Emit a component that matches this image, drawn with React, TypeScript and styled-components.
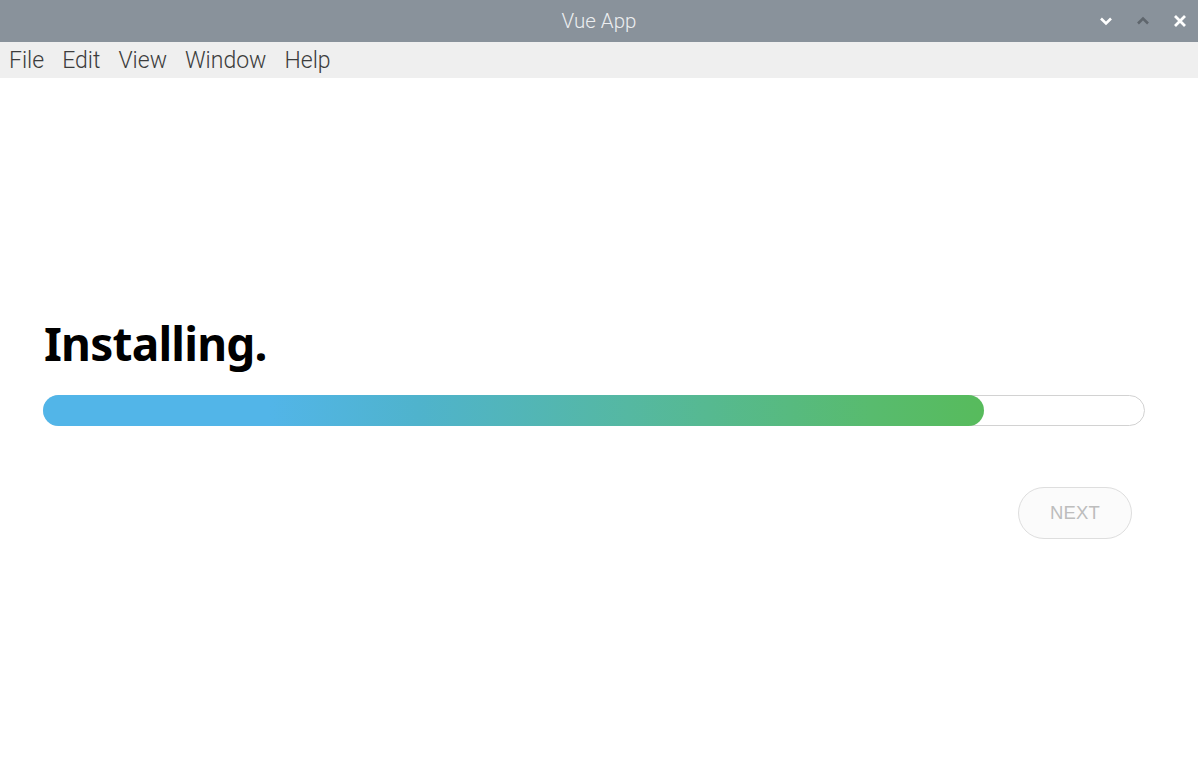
import styled, { createGlobalStyle } from "styled-components";

const GlobalStyle = createGlobalStyle`
  html, body {
    margin: 0;
    padding: 0;
    background: #ffffff;
  }
  * {
    box-sizing: border-box;
  }
`;

const Window = styled.div`
  width: 1198px;
  height: 758px;
  display: flex;
  flex-direction: column;
  overflow: hidden;
  background: #ffffff;
`;

const TitleBar = styled.div`
  height: 42px;
  background: #89929b;
  display: grid;
  grid-template-columns: 1fr auto 1fr;
  align-items: center;
  padding: 0 8px;
`;

const Title = styled.div`
  grid-column: 2;
  font-family: Roboto, "Liberation Sans", sans-serif;
  font-weight: 300;
  font-size: 20.5px;
  color: #eceef0;
`;

const Controls = styled.div`
  grid-column: 3;
  justify-self: end;
  display: flex;
  align-items: center;
  gap: 21px;
  padding-right: 2px;
`;

const ControlIcon = styled.svg<{ $dim?: boolean }>`
  width: 16px;
  height: 16px;
  color: ${(p) => (p.$dim ? "#5f666d" : "#ffffff")};
`;

const MenuBar = styled.div`
  height: 36px;
  background: #efefef;
  display: flex;
  align-items: center;
  gap: 18px;
  padding: 0 9px;
`;

const MenuItem = styled.span`
  font-family: Roboto, "Liberation Sans", sans-serif;
  font-size: 23px;
  font-weight: 300;
  color: #3c3c3c;
`;

const Content = styled.main`
  flex: 1;
  display: flex;
  flex-direction: column;
  padding: 232px 53px 0 43px;
`;

const Heading = styled.h1`
  margin: 0;
  font-family: "Noto Sans", "Open Sans", sans-serif;
  font-weight: 700;
  font-size: 46px;
  line-height: 66px;
  color: #000000;
  letter-spacing: -0.8px;
  padding-left: 1px;
`;

const Track = styled.div`
  margin-top: 19px;
  height: 31px;
  border: 1px solid #d2d2d2;
  border-radius: 16px;
  background: #ffffff;
  display: flex;
`;

const Fill = styled.div`
  border-radius: 16px;
  margin: -1px 0 0 -1px;
  height: 31px;
  background: linear-gradient(
    90deg,
    #52b5e8 0%,
    #52b5e8 24%,
    #4fb3cc 40%,
    #55b8a2 62%,
    #58bb6e 88%,
    #57bb5c 100%
  );
`;

const Actions = styled.div`
  display: flex;
  justify-content: flex-end;
  margin-top: 61px;
  padding-right: 13px;
`;

const NextButton = styled.button`
  width: 114px;
  height: 52px;
  border: 1px solid #dedede;
  border-radius: 26px;
  background: #fbfbfb;
  color: #bdbdbd;
  font-family: "Liberation Sans", Arial, sans-serif;
  font-size: 18.5px;
  letter-spacing: 0.2px;
  cursor: default;
`;

export default function App() {
  const progress = 85.5;
  return (
    <>
      <GlobalStyle />
      <Window>
        <TitleBar>
          <Title>Vue App</Title>
          <Controls>
            <ControlIcon viewBox="0 0 16 16">
              <path d="M3 5.5l5 5 5-5" fill="none" stroke="currentColor" strokeWidth="2.6" />
            </ControlIcon>
            <ControlIcon viewBox="0 0 16 16" $dim>
              <path d="M3 10.5l5-5 5 5" fill="none" stroke="currentColor" strokeWidth="2.6" />
            </ControlIcon>
            <ControlIcon viewBox="0 0 16 16">
              <path d="M3 3l10 10M13 3L3 13" fill="none" stroke="currentColor" strokeWidth="2.8" />
            </ControlIcon>
          </Controls>
        </TitleBar>
        <MenuBar>
          <MenuItem>File</MenuItem>
          <MenuItem>Edit</MenuItem>
          <MenuItem>View</MenuItem>
          <MenuItem>Window</MenuItem>
          <MenuItem>Help</MenuItem>
        </MenuBar>
        <Content>
          <Heading>Installing.</Heading>
          <Track>
            <Fill style={{ width: `${progress}%` }} />
          </Track>
          <Actions>
            <NextButton>NEXT</NextButton>
          </Actions>
        </Content>
      </Window>
    </>
  );
}
